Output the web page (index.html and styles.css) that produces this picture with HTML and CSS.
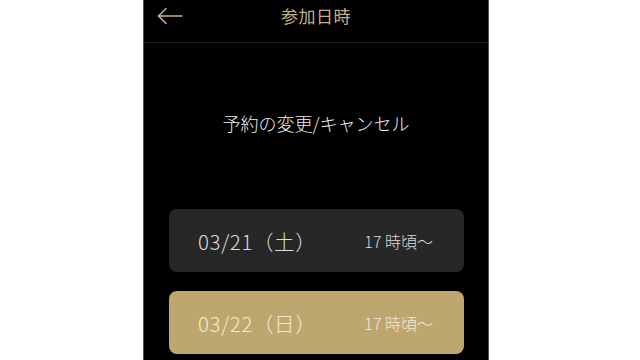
FILE: index.html
```html
<!DOCTYPE html>
<html lang="ja">
<head>
<meta charset="utf-8">
<link rel="stylesheet" href="styles.css">
</head>
<body>
<div class="screen">
  <header class="header">
    <svg class="back" width="26" height="18" viewBox="0 0 26 18" fill="none" stroke="#c9b28c" stroke-width="1.5" stroke-linecap="round" stroke-linejoin="round">
      <path d="M25 9H1.5"/>
      <path d="M9 1.5L1.5 9L9 16.5"/>
    </svg>
    <h1 class="title">参加日時</h1>
  </header>
  <p class="heading">予約の変更/キャンセル</p>
  <div class="cards">
    <div class="card card-dark">
      <span class="date">03/21（土）</span>
      <span class="time">17 時頃〜</span>
    </div>
    <div class="card card-gold">
      <span class="date">03/22（日）</span>
      <span class="time">17 時頃〜</span>
    </div>
  </div>
</div>
</body>
</html>
```
FILE: styles.css
```css
html, body {
  margin: 0;
  padding: 0;
  background: #ffffff;
}
body {
  font-family: "Noto Sans CJK JP", "Noto Sans", sans-serif;
  font-weight: 300;
  height: 360px;
  overflow: hidden;
}
.screen {
  margin-left: 143px;
  width: 344px;
  height: 360px;
  background: #000;
  border-left: 1px solid #555;
  border-right: 1px solid #555;
}
.header {
  position: relative;
  height: 42px;
  border-bottom: 1px solid #1e1e1e;
  display: flex;
  align-items: center;
  justify-content: center;
}
.back {
  position: absolute;
  left: 13px;
  top: 7px;
}
.title {
  margin: 0;
  font-size: 17px;
  font-weight: 400;
  color: #c4ae8a;
  letter-spacing: 0.5px;
  line-height: 24px;
  margin-top: -10px;
}
.heading {
  margin: 67px 0 0 0;
  text-align: center;
  color: #ececec;
  font-size: 18px;
  line-height: 26px;
}
.cards {
  margin-top: 73px;
  padding: 0 24px 0 25px;
  display: flex;
  flex-direction: column;
  gap: 19px;
}
.card {
  height: 63px;
  border-radius: 8px;
  display: flex;
  align-items: center;
  justify-content: space-between;
  padding: 0 31px 0 29px;
}
.card-dark {
  background: #272727;
  color: #dcdcdc;
}
.card-gold {
  background: #bea66f;
  color: #f1ead9;
}
.date {
  font-size: 20.5px;
  letter-spacing: 0.6px;
}
.time {
  font-size: 16px;
}
```
